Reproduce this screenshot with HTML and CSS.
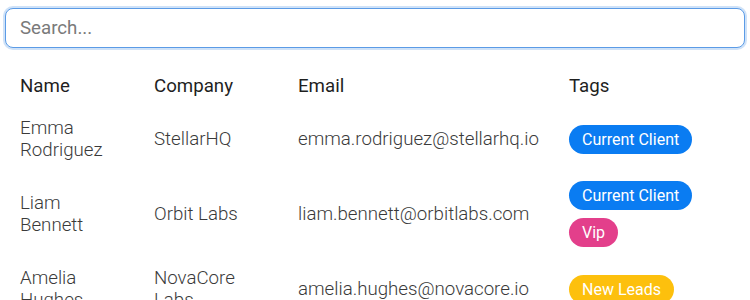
FILE: index.html
```html
<!DOCTYPE html>
<html lang="en">
<head>
    <meta charset="UTF-8">
    <meta name="viewport" content="width=device-width, initial-scale=1.0">
    <title>Contacts</title>
    <link rel="stylesheet" href="styles.css">
</head>
<body>
    <div class="contacts">
        <input type="text" class="search" placeholder="Search..." autofocus>

        <table class="contact-table">
            <colgroup>
                <col class="col-name">
                <col class="col-company">
                <col class="col-email">
                <col>
            </colgroup>
            <thead>
                <tr>
                    <th>Name</th>
                    <th>Company</th>
                    <th>Email</th>
                    <th>Tags</th>
                </tr>
            </thead>
            <tbody>
                <tr>
                    <td class="narrow">Emma Rodriguez</td>
                    <td class="narrow">StellarHQ</td>
                    <td>emma.rodriguez@stellarhq.io</td>
                    <td>
                        <div class="tags">
                            <span class="tag tag-client">Current Client</span>
                        </div>
                    </td>
                </tr>
                <tr>
                    <td class="narrow">Liam Bennett</td>
                    <td class="narrow">Orbit Labs</td>
                    <td>liam.bennett@orbitlabs.com</td>
                    <td>
                        <div class="tags">
                            <span class="tag tag-client">Current Client</span>
                            <span class="tag tag-vip">Vip</span>
                        </div>
                    </td>
                </tr>
                <tr>
                    <td class="narrow">Amelia Hughes</td>
                    <td class="narrow">NovaCore Labs</td>
                    <td>amelia.hughes@novacore.io</td>
                    <td>
                        <div class="tags">
                            <span class="tag tag-lead">New Leads</span>
                        </div>
                    </td>
                </tr>
            </tbody>
        </table>
    </div>
</body>
</html>
```

FILE: styles.css
```css
body {
    margin: 0;
    font-family: Roboto, "Liberation Sans", sans-serif;
    background-color: #fff;
    color: #333;
}

.contacts {
    padding: 8px 5px;
}

.search {
    display: block;
    box-sizing: border-box;
    width: 100%;
    height: 40px;
    padding: 0 14px;
    font-family: inherit;
    font-size: 18.7px;
    color: #333;
    border: 1px solid #5b9be6;
    border-radius: 8px;
    box-shadow: 0 0 0 2px #cfe2f8;
    outline: none;
}

.search::placeholder {
    color: #7a7a7a;
}

.contact-table {
    margin-top: 17px;
    margin-left: 5px;
    border-collapse: collapse;
    table-layout: fixed;
    width: 735px;
}

.col-name {
    width: 134px;
}

.col-company {
    width: 144px;
}

.col-email {
    width: 271px;
}

.contact-table th,
.contact-table td {
    padding: 10px;
    font-size: 18.7px;
    line-height: 22px;
    text-align: left;
    vertical-align: middle;
}

.contact-table td.narrow {
    padding-right: 20px;
}

.contact-table th {
    font-weight: 400;
    color: #1f1f1f;
}

.contact-table td {
    font-weight: 300;
    color: #3a3a3a;
}

.tags {
    display: flex;
    flex-direction: column;
    align-items: flex-start;
    gap: 8px;
}

.tag {
    display: inline-block;
    padding: 4px 13px;
    border-radius: 15px;
    font-size: 16px;
    line-height: 21px;
    font-weight: 400;
    color: #fff;
}

.tag-client {
    background-color: #0a7cf2;
}

.tag-vip {
    background-color: #e33f8b;
}

.tag-lead {
    background-color: #fdc00d;
}
```
